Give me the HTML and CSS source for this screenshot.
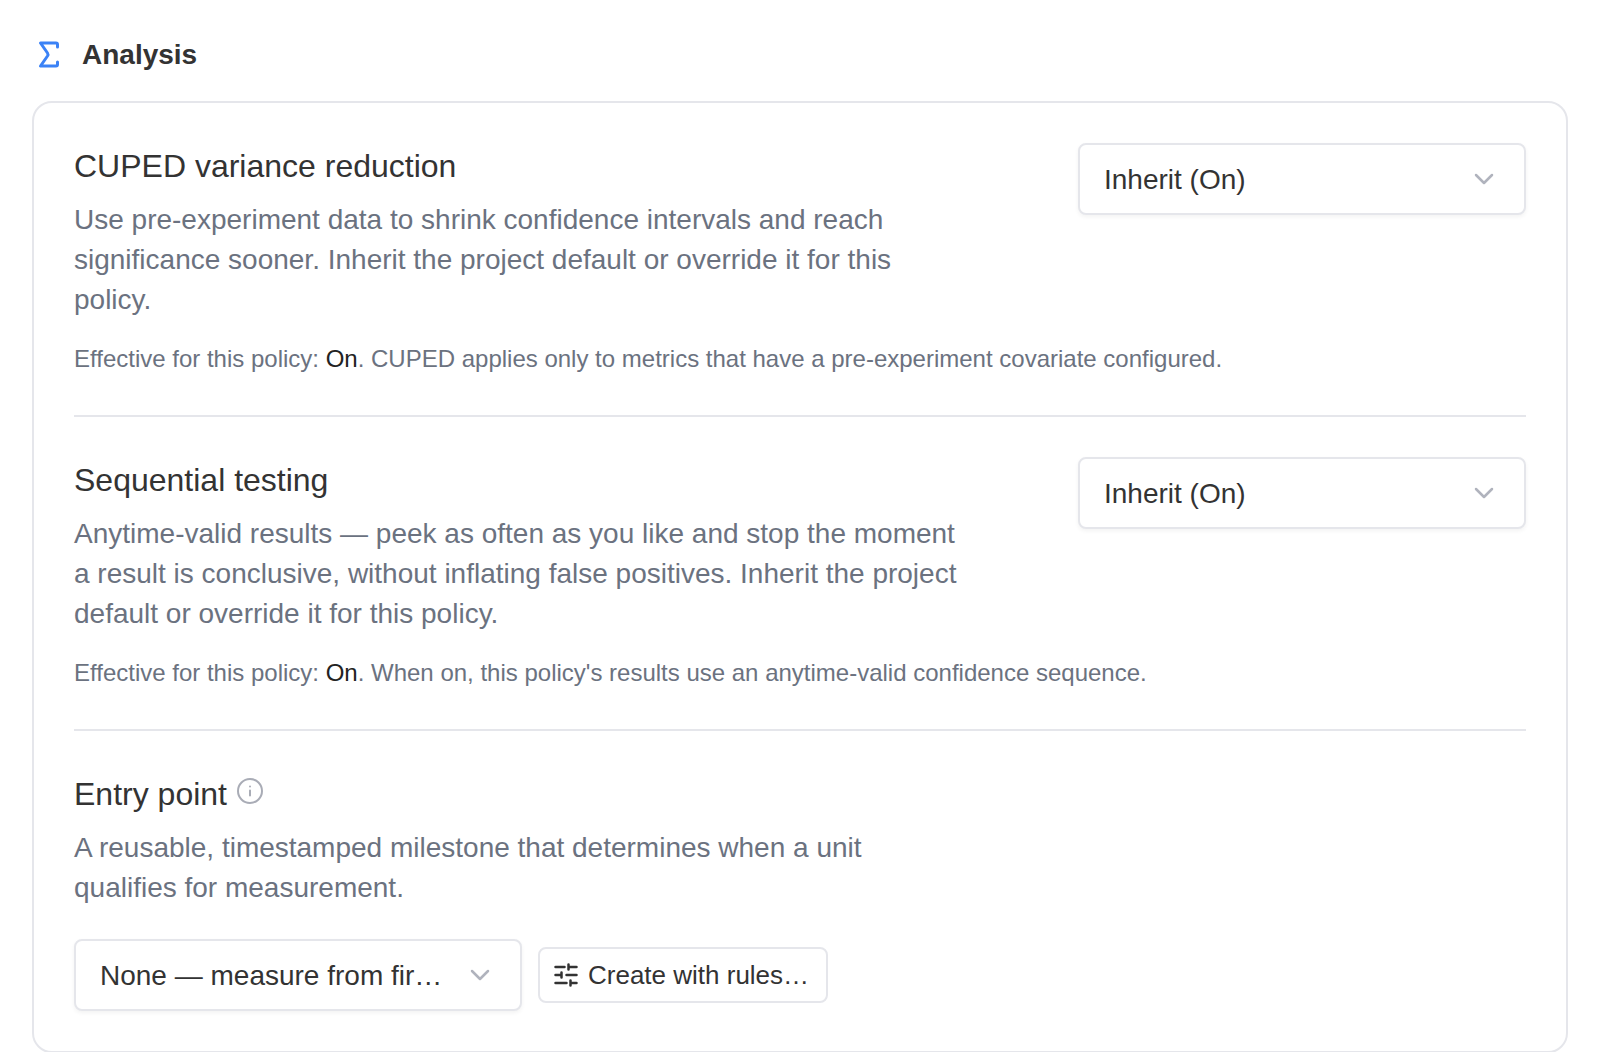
FILE: index.html
```html
<!doctype html>
<html lang="en">
<head>
    <meta charset="UTF-8">
    <meta content="width=device-width, initial-scale=1" name="viewport">
    <title>Analysis</title>
    <link rel="stylesheet" href="styles.css">
</head>
<body>
<main class="analysis">
    <header class="analysis-header">
        <svg class="sigma-icon" viewBox="0 0 32 32" aria-hidden="true">
            <path d="M25.5 8V5.500a1.500 1.500 0 0 0-1.500-1.500H8.500l7 10q1 1.500 0 3L8.500 27H24a1.500 1.500 0 0 0 1.500-1.500V23"/>
        </svg>
        <h1>Analysis</h1>
    </header>

    <div class="card">
        <section class="setting">
            <div class="setting-row">
                <div class="setting-text">
                    <h2><label for="cuped">CUPED variance reduction</label></h2>
                    <p class="description">Use pre-experiment data to shrink confidence intervals and reach
                        significance sooner. Inherit the project default or override it for this policy.</p>
                </div>
                <div class="select">
                    <select id="cuped">
                        <option>Inherit (On)</option>
                        <option>On</option>
                        <option>Off</option>
                    </select>
                    <svg class="chevron" viewBox="0 0 24 24" aria-hidden="true"><path d="M4 8l8 8 8-8"/></svg>
                </div>
            </div>
            <p class="effective">Effective for this policy: <span class="value">On</span>. CUPED applies only to
                metrics that have a pre-experiment covariate configured.</p>
        </section>

        <section class="setting">
            <div class="setting-row">
                <div class="setting-text">
                    <h2><label for="sequential">Sequential testing</label></h2>
                    <p class="description">Anytime-valid results — peek as often as you like and stop the moment a
                        result is conclusive, without inflating false positives. Inherit the project default or
                        override it for this policy.</p>
                </div>
                <div class="select">
                    <select id="sequential">
                        <option>Inherit (On)</option>
                        <option>On</option>
                        <option>Off</option>
                    </select>
                    <svg class="chevron" viewBox="0 0 24 24" aria-hidden="true"><path d="M4 8l8 8 8-8"/></svg>
                </div>
            </div>
            <p class="effective">Effective for this policy: <span class="value">On</span>. When on, this policy's
                results use an anytime-valid confidence sequence.</p>
        </section>

        <section class="setting">
            <div class="setting-text">
                <h2>
                    <label for="entry-point">Entry point</label>
                    <svg class="info-icon" viewBox="0 0 26 26" aria-hidden="true">
                        <circle cx="13" cy="13" r="12"/>
                        <path d="M13 12.500v5M13 8.500v.01"/>
                    </svg>
                </h2>
                <p class="description">A reusable, timestamped milestone that determines when a unit qualifies for
                    measurement.</p>
            </div>
            <div class="actions">
                <div class="select">
                    <select id="entry-point">
                        <option>None — measure from first exposure</option>
                    </select>
                    <svg class="chevron" viewBox="0 0 24 24" aria-hidden="true"><path d="M4 8l8 8 8-8"/></svg>
                </div>
                <button class="create-button" type="button">
                    <svg class="sliders-icon" viewBox="0 0 24 24" aria-hidden="true">
                        <path d="M1.500 4h9M14.500 4h8M14.500 1.500v5M1.500 12h6M12.500 12h10M7.500 9.500v5M1.500 20h11M16.500 20h6M16.500 17.500v5"/>
                    </svg>
                    Create with rules…
                </button>
            </div>
        </section>
    </div>
</main>
</body>
</html>
```
FILE: styles.css
```css
* {
    box-sizing: border-box;
}

body {
    margin: 0;
    background: #fff;
    color: #333;
    font-family: "Liberation Sans", Arial, sans-serif;
}

h1, h2, p {
    margin: 0;
}

svg {
    flex: none;
    fill: none;
    stroke: currentColor;
    stroke-width: 2;
    stroke-linecap: round;
    stroke-linejoin: round;
}

.analysis {
    padding: 32px;
}

.analysis-header {
    display: flex;
    align-items: center;
    gap: 18px;
    margin-bottom: 24px;
}

.analysis-header h1 {
    font-size: 28px;
    line-height: 45px;
}

.sigma-icon {
    width: 32px;
    height: 32px;
    color: #3b82f6;
    stroke-width: 3;
}

.card {
    padding: 0 40px;
    border: 2px solid #e5e6eb;
    border-radius: 20px;
}

.setting {
    padding: 40px 0;
}

.setting + .setting {
    border-top: 2px solid #e5e6eb;
}

.setting-row {
    display: flex;
    align-items: flex-start;
    justify-content: space-between;
    gap: 48px;
}

.setting-text {
    max-width: 896px;
}

.setting h2 {
    display: flex;
    align-items: center;
    gap: 10px;
    font-size: 32px;
    font-weight: 400;
    line-height: 46px;
}

.description {
    margin-top: 11px;
    color: #6b7280;
    font-size: 28px;
    line-height: 40px;
}

.effective {
    margin-top: 23px;
    color: #6b7280;
    font-size: 24px;
    line-height: 32px;
}

.value {
    color: #222;
}

.info-icon {
    width: 26px;
    height: 26px;
    margin-bottom: 6px;
    color: #a9acb6;
}

.select {
    position: relative;
    flex: none;
    width: 448px;
}

.select select {
    display: block;
    width: 100%;
    height: 72px;
    padding: 0 76px 0 24px;
    border: 2px solid #e5e6eb;
    border-radius: 8px;
    background: #fff;
    box-shadow: 0 2px 4px rgba(0, 0, 0, 0.05);
    color: #333;
    font: inherit;
    font-size: 28px;
    text-overflow: ellipsis;
    appearance: none;
}

/* sits over the select, clicks go through to it */
.chevron {
    position: absolute;
    top: 24px;
    right: 30px;
    width: 24px;
    height: 24px;
    color: #b0b3bd;
    stroke-width: 2.5;
    pointer-events: none;
}

.actions {
    display: flex;
    align-items: center;
    gap: 16px;
    margin-top: 31px;
}

.create-button {
    display: flex;
    align-items: center;
    gap: 10px;
    height: 56px;
    padding: 0 17px 0 14px;
    border: 2px solid #e5e6eb;
    border-radius: 8px;
    background: #fff;
    color: #333;
    font: inherit;
    font-size: 26px;
}

.sliders-icon {
    width: 24px;
    height: 24px;
    stroke-width: 2.5;
}
```
